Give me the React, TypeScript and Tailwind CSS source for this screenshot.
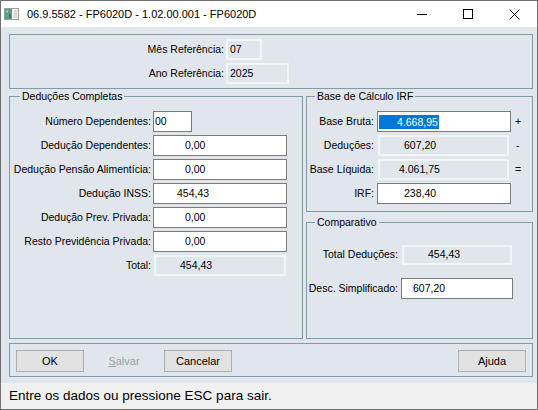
import type { ReactNode } from 'react';

function ReadOnly({ className, children }: { className: string; children?: ReactNode }) {
  return (
    <div className={`flex items-center border-2 border-[#eef7f8] whitespace-nowrap ${className}`}>
      {children}
    </div>
  );
}

function Field({ className, children }: { className: string; children?: ReactNode }) {
  return (
    <div className={`flex items-center bg-white border border-[#7a7a7a] whitespace-nowrap ${className}`}>
      {children}
    </div>
  );
}

function Label({ children }: { children: ReactNode }) {
  return <div className="flex items-center justify-end whitespace-nowrap">{children}</div>;
}

function Group({ title, className, legendClass, children }: { title: string; className: string; legendClass: string; children: ReactNode }) {
  return (
    <fieldset className={`border border-[#7d9caa] ${className}`}>
      <legend className={`leading-[13px] px-[2px] ${legendClass}`}>{title}</legend>
      {children}
    </fieldset>
  );
}

function Button({ children }: { children: ReactNode }) {
  return (
    <button className="h-[22px] w-[68px] bg-[#e1e1e1] border border-[#adadad] text-[11px]">
      {children}
    </button>
  );
}

function TitleIcon() {
  return (
    <svg width="16" height="14" viewBox="0 0 16 14">
      <rect x="0.5" y="1.5" width="14" height="11" fill="#f2f2f2" stroke="#9c9c9c" />
      <rect x="1" y="2" width="7" height="10" fill="#5f9c86" />
      <rect x="2" y="3" width="2" height="3" fill="#8cc3ae" />
      <rect x="5" y="7" width="2" height="4" fill="#3f7a66" />
      <rect x="10" y="3" width="3" height="8" fill="#d9d9d9" />
    </svg>
  );
}

export default function App() {
  return (
    <div className="w-[538px] h-[410px] flex flex-col border border-[#707070] bg-[#e1e5ec] text-black overflow-hidden font-['Liberation_Sans',Arial,sans-serif] text-[10.5px]">
      {/* title bar */}
      <div className="h-[26px] bg-white flex items-center shrink-0">
        <div className="pl-[3px] flex items-center">
          <TitleIcon />
        </div>
        <span className="ml-[7px] text-[11px]">06.9.5582 - FP6020D - 1.02.00.001 - FP6020D</span>
        <div className="ml-auto flex h-full">
          <div className="w-[46px] flex items-center justify-center">
            <svg width="10" height="10" viewBox="0 0 10 10">
              <path d="M0 5.5h10" stroke="#000" strokeWidth="1" />
            </svg>
          </div>
          <div className="w-[46px] flex items-center justify-center">
            <svg width="10" height="10" viewBox="0 0 10 10">
              <rect x="0.5" y="0.5" width="9" height="9" fill="none" stroke="#000" strokeWidth="1" />
            </svg>
          </div>
          <div className="w-[46px] flex items-center justify-center">
            <svg width="11" height="11" viewBox="0 0 11 11">
              <path d="M0.5 0.5l10 10M10.5 0.5l-10 10" stroke="#000" strokeWidth="1" />
            </svg>
          </div>
        </div>
      </div>

      {/* dialog body */}
      <div className="flex-1 flex flex-col pl-[8px] pr-[4px] pt-[7px]">
        <div className="h-[55px] border border-[#7d9caa] pt-[4px]">
          <div className="grid grid-cols-[214px_auto] gap-x-[2px] gap-y-[3px] auto-rows-[21px]">
            <Label>Mês Referência:</Label>
            <ReadOnly className="w-[36px] h-[21px] pl-[2px]">07</ReadOnly>
            <Label>Ano Referência:</Label>
            <ReadOnly className="w-[63px] h-[21px] pl-[2px]">2025</ReadOnly>
          </div>
        </div>

        <div className="mt-[1px] flex gap-[3px]">
          <Group title="Deduções Completas" className="w-[294px] h-[249px]" legendClass="ml-[10px]">
            <div className="grid grid-cols-[141px_auto] gap-x-[2px] gap-y-[3px] auto-rows-[21px] pt-[8px]">
              <Label>Número Dependentes:</Label>
              <Field className="w-[39px] h-[21px] pl-[1px]">00</Field>
              <Label>Dedução Dependentes:</Label>
              <Field className="w-[134px] h-[21px] pl-[31px]">0,00</Field>
              <Label>Dedução Pensão Alimentícia:</Label>
              <Field className="w-[134px] h-[21px] pl-[31px]">0,00</Field>
              <Label>Dedução INSS:</Label>
              <Field className="w-[134px] h-[21px] pl-[23px]">454,43</Field>
              <Label>Dedução Prev. Privada:</Label>
              <Field className="w-[134px] h-[21px] pl-[31px]">0,00</Field>
              <Label>Resto Previdência Privada:</Label>
              <Field className="w-[134px] h-[21px] pl-[31px]">0,00</Field>
              <Label>Total:</Label>
              <ReadOnly className="w-[132px] h-[21px] ml-[1px] pl-[24px]">454,43</ReadOnly>
            </div>
          </Group>

          <div className="w-[227px] flex flex-col">
            <Group title="Base de Cálculo IRF" className="h-[122px]" legendClass="ml-[8px]">
              <div className="grid grid-cols-[67px_134px_auto] gap-x-[3px] gap-y-[3px] auto-rows-[21px] pt-[8px]">
                <Label>Base Bruta:</Label>
                <Field className="w-[134px] h-[21px] pl-[1px]">
                  <span className="h-[14px] leading-[14px] bg-[#0078d7] text-white pl-[18px] pr-[1px]">4.668,95</span>
                </Field>
                <div className="flex items-center pl-[1px]">+</div>
                <Label>Deduções:</Label>
                <ReadOnly className="w-[131px] h-[21px] ml-[1px] pl-[24px]">607,20</ReadOnly>
                <div className="flex items-center pl-[2px]">-</div>
                <Label>Base Líquida:</Label>
                <ReadOnly className="w-[131px] h-[21px] ml-[1px] pl-[19px]">4.061,75</ReadOnly>
                <div className="flex items-center pl-[1px]">=</div>
                <Label>IRF:</Label>
                <Field className="w-[134px] h-[21px] pl-[26px]">238,40</Field>
                <div />
              </div>
            </Group>

            <Group title="Comparativo" className="mt-[4px] h-[123px]" legendClass="ml-[8px]">
              <div className="grid grid-cols-[91px_auto] gap-x-[3px] pt-[16px]">
                <div className="h-[20px] flex items-center justify-end whitespace-nowrap">Total Deduções:</div>
                <ReadOnly className="w-[110px] h-[20px] ml-[1px] pl-[24px]">454,43</ReadOnly>
                <div className="mt-[13px] h-[21px] flex items-center justify-end whitespace-nowrap">Desc. Simplificado:</div>
                <Field className="mt-[13px] w-[112px] h-[21px] pl-[11px]">607,20</Field>
              </div>
            </Group>
          </div>
        </div>

        {/* buttons */}
        <div className="mt-[4px] h-[34px] border border-[#7d9caa] flex items-start gap-[6px] pt-[6px] pl-[6px] pr-[6px]">
          <Button>OK</Button>
          <button className="h-[22px] w-[68px] text-[11px] text-[#a0a0a0]" disabled>
            <span className="underline">S</span>alvar
          </button>
          <Button>Cancelar</Button>
          <div className="ml-auto">
            <Button>Ajuda</Button>
          </div>
        </div>
      </div>

      {/* status bar */}
      <div className="h-[26px] shrink-0 bg-[#f0f0f0] flex items-center pl-[8px] text-[13.5px]">
        Entre os dados ou pressione ESC para sair.
      </div>
    </div>
  );
}
